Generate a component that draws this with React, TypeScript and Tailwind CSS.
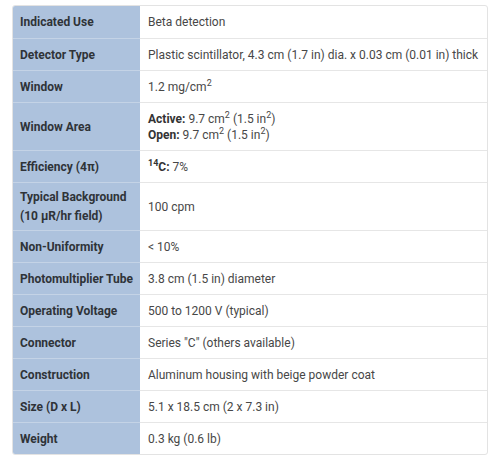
import React from "react";

const rows: { label: React.ReactNode; value: React.ReactNode; tall?: boolean }[] = [
  { label: "Indicated Use", value: "Beta detection" },
  { label: "Detector Type", value: "Plastic scintillator, 4.3 cm (1.7 in) dia. x 0.03 cm (0.01 in) thick" },
  { label: "Window", value: <>1.2 mg/cm<sup className="text-[9px]">2</sup></> },
  {
    label: "Window Area",
    tall: true,
    value: (
      <div className="leading-[16px]">
        <div><b className="font-bold text-[#333]">Active:</b> 9.7 cm<sup className="text-[9px]">2</sup> (1.5 in<sup className="text-[9px]">2</sup>)</div>
        <div><b className="font-bold text-[#333]">Open:</b> 9.7 cm<sup className="text-[9px]">2</sup> (1.5 in<sup className="text-[9px]">2</sup>)</div>
      </div>
    ),
  },
  { label: "Efficiency (4π)", value: <><sup className="text-[9px] font-bold text-[#333]">14</sup><b className="font-bold text-[#333]">C:</b> 7%</> },
  {
    label: (
      <div className="leading-[19px]">
        <div>Typical Background</div>
        <div>(10 µR/hr field)</div>
      </div>
    ),
    value: "100 cpm",
    tall: true,
  },
  { label: "Non-Uniformity", value: "< 10%" },
  { label: "Photomultiplier Tube", value: "3.8 cm (1.5 in) diameter" },
  { label: "Operating Voltage", value: "500 to 1200 V (typical)" },
  { label: "Connector", value: 'Series "C" (others available)' },
  { label: "Construction", value: "Aluminum housing with beige powder coat" },
  { label: "Size (D x L)", value: "5.1 x 18.5 cm (2 x 7.3 in)" },
  { label: "Weight", value: "0.3 kg (0.6 lb)" },
];

export default function App() {
  return (
    <div className="w-[500px] h-[469px] bg-white pt-[5px] pl-[12px]" style={{ fontFamily: "Roboto, 'Liberation Sans', sans-serif" }}>
      <div className="w-[476px] border border-[#e3e3e3] rounded-[3px] overflow-hidden text-[12px] text-[#474747]">
        {rows.map((r, i) => (
          <div key={i} className={`flex ${r.tall ? "h-[48px]" : "h-[32px]"}`}>
            <div className={`w-[127px] shrink-0 bg-[#adc2dd] flex items-center pl-[7px] font-bold text-[#2f3338] whitespace-nowrap ${i > 0 ? "border-t border-[#c4d3e6]" : ""}`}>
              {r.label}
            </div>
            <div className={`flex-1 flex items-center pl-[8px] whitespace-nowrap ${i > 0 ? "border-t border-[#e6e6e6]" : ""}`}>
              <div>{r.value}</div>
            </div>
          </div>
        ))}
      </div>
    </div>
  );
}
